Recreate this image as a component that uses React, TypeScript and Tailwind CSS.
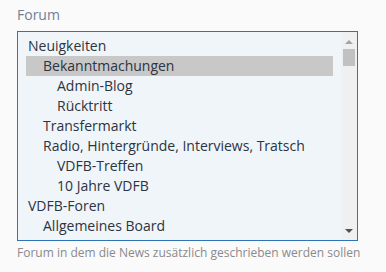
import * as React from "react";

const forums: { label: string; level: number; selected?: boolean }[] = [
  { label: "Neuigkeiten", level: 0 },
  { label: "Bekanntmachungen", level: 1, selected: true },
  { label: "Admin-Blog", level: 2 },
  { label: "Rücktritt", level: 2 },
  { label: "Transfermarkt", level: 1 },
  { label: "Radio, Hintergründe, Interviews, Tratsch", level: 1 },
  { label: "VDFB-Treffen", level: 2 },
  { label: "10 Jahre VDFB", level: 2 },
  { label: "VDFB-Foren", level: 0 },
  { label: "Allgemeines Board", level: 1 },
];

const indent = ["pl-[2px]", "pl-[17px]", "pl-[31px]"];

export default function App() {
  return (
    <div className="min-h-[272px] bg-[#fafafa] px-[17px] pt-[5px] font-['Open_Sans',sans-serif]">
      <label className="block text-[14px] leading-[20px] text-[#718096]">Forum</label>

      <div className="mt-[6px] flex h-[210px] w-[341px] border border-[#2f75b5] bg-[#f0f5fa]">
        <ul className="min-w-0 flex-1 px-2 py-1">
          {forums.map((f) => (
            <li
              key={f.label}
              className={[
                "h-5 whitespace-nowrap text-[14px] leading-5 text-[#2b3440]",
                indent[f.level],
                f.selected ? "bg-[#c8c8c8]" : "",
              ].join(" ")}
            >
              {f.label}
            </li>
          ))}
        </ul>

        {/* scrollbar */}
        <div className="flex w-[16px] flex-col items-center bg-[#f0f0f0]">
          <div className="mt-[8px] h-0 w-0 border-x-[4px] border-b-[4px] border-x-transparent border-b-[#a3a3a3]" />
          <div className="mt-[5px] h-[17px] w-[12px] bg-[#c1c1c1]" />
          <div className="flex-1" />
          <div className="mb-[7px] h-0 w-0 border-x-[4px] border-t-[4px] border-x-transparent border-t-[#505050]" />
        </div>
      </div>

      <p className="mt-[3px] text-[12px] leading-[18px] text-[#8a8a8a]">
        Forum in dem die News zusätzlich geschrieben werden sollen
      </p>
    </div>
  );
}
